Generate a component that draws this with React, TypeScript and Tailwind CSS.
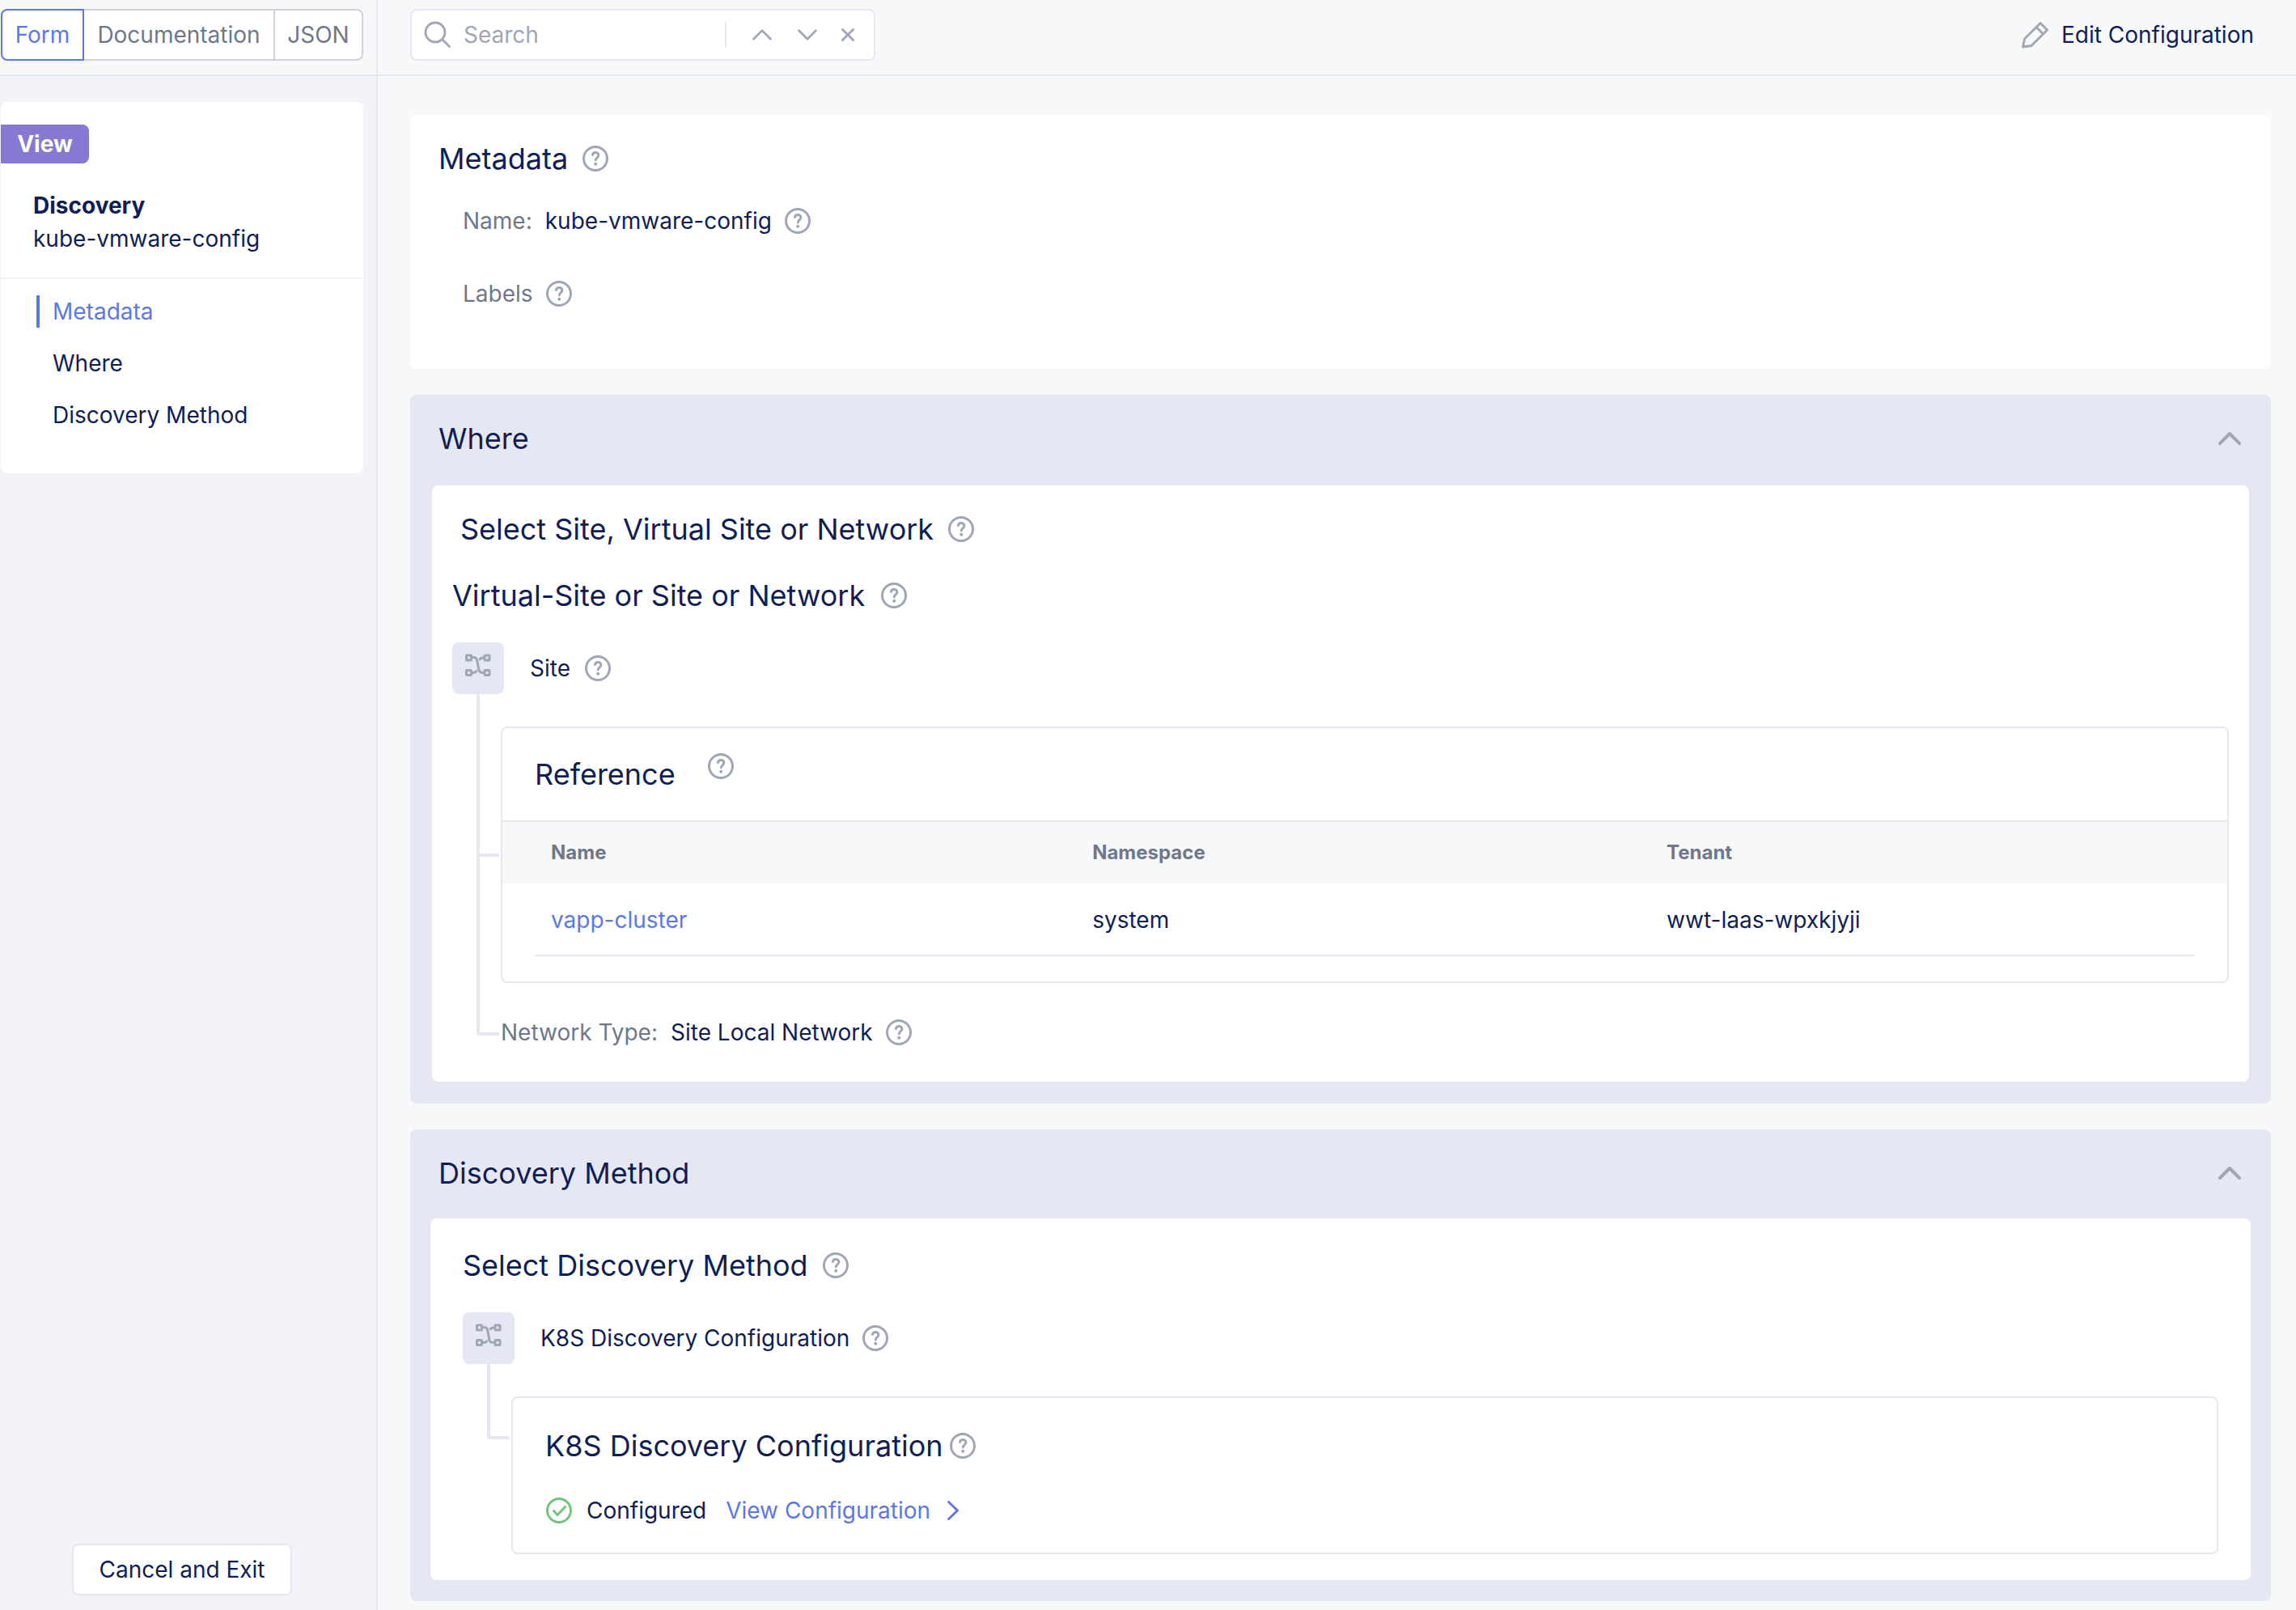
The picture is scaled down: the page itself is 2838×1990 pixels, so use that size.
import React from "react";

const GREY = "#9fa6b6";

function Help() {
  return (
    <button type="button" aria-label="Help" className="block h-8 w-8 shrink-0">
      <svg viewBox="0 0 32 32" fill="none" stroke={GREY} strokeLinecap="round" strokeLinejoin="round" className="h-8 w-8">
        <circle cx="16" cy="16" r="14.5" strokeWidth="3" />
        <path d="M12.4 11.6c.3-1.900 1.800-3.100 3.700-3.100 2.200 0 3.800 1.400 3.800 3.400 0 2.800-3.600 3.200-3.600 6.100" strokeWidth="2.900" />
        <circle cx="16.200" cy="22.800" r="2" fill={GREY} stroke="none" />
      </svg>
    </button>
  );
}

function Node() {
  return (
    <div className="h-16 w-16 shrink-0 rounded-lg bg-[#e5e8f2]">
      <svg viewBox="0 0 64 64" fill="none" stroke={GREY} strokeWidth="3" className="h-16 w-16">
        <rect x="17.500" y="16" width="6" height="6" rx=".5" />
        <rect x="40" y="16" width="6" height="6" rx=".5" />
        <rect x="17.500" y="34.500" width="6" height="6" rx=".5" />
        <rect x="40" y="34.500" width="6" height="6" rx=".5" />
        <path d="M25 18.500h1.500c3 0 4 2 4.500 5l1.500 9c.5 3 2.500 5 5 5H39M39 19h-1c-2 0-3.500 1-4.300 2.800M25 37.500h1c2 0 3.500-1 4.300-2.800" />
      </svg>
    </div>
  );
}

function Chevron({ className }: { className: string }) {
  return (
    <svg viewBox="0 0 32 20" fill="none" stroke="currentColor" strokeLinecap="round" strokeLinejoin="round" className={className}>
      <path d="M4 16 16 4l12 12" />
    </svg>
  );
}

function Panel({ id, title, children, inner }: { id: string; title: string; children: React.ReactNode; inner: string }) {
  return (
    <section id={id} className="flex flex-col rounded-lg bg-[#e5e8f2]">
      <button type="button" className="flex h-[108px] items-center justify-between px-[35px] text-left">
        <h2 className="text-4xl leading-[44px]">{title}</h2>
        <Chevron className="h-5 w-8 stroke-4 text-[#9fa6b6]" />
      </button>
      <div className={inner}>{children}</div>
    </section>
  );
}

const nav = [
  { label: "Where", href: "#where" },
  { label: "Discovery Method", href: "#discovery-method" },
];

export default function App() {
  return (
    <div className="flex min-h-screen bg-[#f7f8fa] font-['Inter',sans-serif] text-[28px] leading-10 text-[#0f1e57]">
      <aside className="flex w-[467px] shrink-0 flex-col border-r-2 border-[#e5e8f2] bg-[#f2f3f9]">
        <div className="h-[94px] border-b-2 border-[#e5e8f2] bg-[#f7f8fa] pt-[11px] pl-px">
          <div className="flex h-16 w-[448px] text-[#6f788a]">
            <button type="button" className="w-[103px] rounded-l-lg border-2 border-[#5b78e6] bg-white text-[#5b78e6]">Form</button>
            <button type="button" className="flex-1 border-y-2 border-[#cfd2dd] bg-white">Documentation</button>
            <button type="button" className="w-[111px] rounded-r-lg border-2 border-[#cfd2dd] bg-white">JSON</button>
          </div>
        </div>
        <div className="mt-8 ml-px w-[448px] rounded-lg bg-white pt-7 pb-[52px]">
          <div className="flex h-12 w-[109px] items-center justify-center rounded-r-lg bg-[#8579d1] font-bold text-white">View</div>
          <div className="border-b-2 border-[#f2f3f9] pt-8 pb-7 pl-10">
            <h1 className="font-bold">Discovery</h1>
            <p className="pt-px">kube-vmware-config</p>
          </div>
          <nav className="flex flex-col gap-6 pt-5 pl-11">
            <a href="#metadata" className="border-l-4 border-[#5b78e6] pl-4 text-[#5b78e6]">Metadata</a>
            {nav.map((n) => (
              <a key={n.href} href={n.href} className="pl-5">{n.label}</a>
            ))}
          </nav>
        </div>
        <button type="button" className="mt-auto mb-[18px] ml-[89px] h-16 w-[272px] rounded-lg border-2 border-[#e5e8f2] bg-white">Cancel and Exit</button>
      </aside>

      <div className="min-w-0 flex-1">
        <header className="flex h-[94px] items-start justify-between border-b-2 border-[#e5e8f2] pt-[11px] pr-[52px] pl-10">
          <div className="flex h-16 w-[575px] items-center rounded-lg border-2 border-[#e5e8f2] bg-white pr-[22px] pl-[15px] text-[#9fa6b6]">
            <svg viewBox="0 0 34 34" fill="none" stroke="currentColor" strokeWidth="2.800" strokeLinecap="round" className="h-[34px] w-[34px] shrink-0">
              <circle cx="14" cy="14" r="12" />
              <path d="m22.500 22.500 9 9" />
            </svg>
            <input aria-label="Search" placeholder="Search" className="ml-[15px] w-0 flex-1 bg-transparent outline-none placeholder:text-[#9fa6b6]" />
            <span className="h-8 w-[2px] bg-[#e5e8f2]" />
            <button type="button" aria-label="Previous" className="ml-[30px]"><Chevron className="h-[18px] w-7 stroke-[3px]" /></button>
            <button type="button" aria-label="Next" className="ml-7"><Chevron className="h-[18px] w-7 rotate-180 stroke-[3px]" /></button>
            <button type="button" aria-label="Clear" className="ml-[26px]">
              <svg viewBox="0 0 20 20" fill="none" stroke="currentColor" strokeWidth="3" strokeLinecap="round" className="h-5 w-5"><path d="m3.500 3.500 13 13M16.500 3.500l-13 13" /></svg>
            </button>
          </div>
          <button type="button" className="flex h-16 items-center gap-4">
            <svg viewBox="0 0 34 34" fill="none" stroke={GREY} strokeWidth="2.900" strokeLinejoin="round" className="h-[34px] w-[34px]">
              <path d="M2.500 32 4.500 22 24 2.500l8.500 8.500L13 30.500zM19 7.500l8.500 8.500" />
            </svg>
            Edit Configuration
          </button>
        </header>

        <main className="flex flex-col gap-8 pt-12 pr-[31px] pb-[11px] pl-10">
          <section id="metadata" className="rounded-lg bg-white pt-8 pb-[73px] pl-[35px]">
            <div className="flex items-center gap-[18px]"><h2 className="text-4xl leading-[44px]">Metadata</h2><Help /></div>
            <div className="flex items-center pt-[35px] pl-[30px]">
              <span className="text-[#6f788a]">Name:</span><span className="mx-4">kube-vmware-config</span><Help />
            </div>
            <div className="flex items-center gap-4 pt-[50px] pl-[30px] text-[#6f788a]">Labels<Help /></div>
          </section>

          <Panel id="where" title="Where" inner="mx-[27px] mt-1 mb-[27px] rounded-lg bg-white pt-8 pr-[25px] pb-[41px] pl-[25px]">
            <div className="flex items-center gap-[18px] pl-[10px]"><h3 className="text-4xl leading-[44px]">Select Site, Virtual Site or Network</h3><Help /></div>
            <div className="flex items-center gap-5 pt-[38px]"><h3 className="text-4xl leading-[44px]">Virtual-Site or Site or Network</h3><Help /></div>
            <div className="flex items-center pt-9"><Node /><span className="mr-[18px] ml-8">Site</span><Help /></div>
            <div className="ml-[30px] flex items-center border-l-4 border-[#e5e8f2] pt-10">
              <div className="mr-[2px] h-1 w-6 shrink-0 bg-[#e5e8f2]" />
              <div className="flex-1 rounded-lg border-2 border-[#e5e8f2] pb-[31px]">
                <div className="flex h-[116px] items-start gap-10 border-b-2 border-[#e5e8f2] pt-[31px] pl-10">
                  <h4 className="mt-1 text-4xl leading-[44px]">Reference</h4><Help />
                </div>
                <table className="w-full table-fixed text-left">
                  <thead className="bg-[#f7f8fa] text-2xl text-[#6f788a]">
                    <tr className="h-[76px]">
                      <th className="w-[34.2%] pl-[60px] font-bold">Name</th>
                      <th className="w-[33.3%] font-bold">Namespace</th>
                      <th className="font-bold">Tenant</th>
                    </tr>
                  </thead>
                  <tbody>
                    <tr className="h-[90px]">
                      <td className="pl-[60px]"><a href="#vapp-cluster" className="text-[#5b78e6]">vapp-cluster</a></td>
                      <td>system</td>
                      <td>wwt-laas-wpxkjyji</td>
                    </tr>
                  </tbody>
                </table>
                <div className="mx-10 -mt-[2px] h-[2px] bg-[#e5e8f2]" />
              </div>
            </div>
            <div className="ml-[30px] flex items-start">
              <div className="h-[65px] w-7 shrink-0 rounded-bl border-b-4 border-l-4 border-[#e5e8f2]" />
              <div className="flex items-center pt-[41px] pl-[2px]">
                <span className="text-[#6f788a]">Network Type:</span><span className="mx-4">Site Local Network</span><Help />
              </div>
            </div>
          </Panel>

          <Panel id="discovery-method" title="Discovery Method" inner="mx-[25px] mt-[2px] mb-[26px] rounded-lg bg-white px-10 pt-9 pb-8">
            <div className="flex items-center gap-[18px]"><h3 className="text-4xl leading-[44px]">Select Discovery Method</h3><Help /></div>
            <div className="flex items-center pt-9"><Node /><span className="mr-4 ml-8">K8S Discovery Configuration</span><Help /></div>
            <div className="ml-[30px] flex items-start gap-[2px]">
              <div className="h-[93px] w-7 shrink-0 rounded-bl border-b-4 border-l-4 border-[#e5e8f2]" />
              <div className="mt-10 flex-1 rounded-lg border-2 border-[#e5e8f2] pt-[37px] pb-8 pl-10">
                <div className="flex items-center gap-2"><h4 className="text-4xl leading-[44px]">K8S Discovery Configuration</h4><Help /></div>
                <div className="flex items-center pt-[38px] pl-px">
                  <svg viewBox="0 0 32 32" fill="none" stroke="#6cc579" strokeWidth="2.900" strokeLinecap="round" strokeLinejoin="round" className="h-8 w-8">
                    <circle cx="16" cy="16" r="14.500" />
                    <path d="m9.500 16.500 4.500 5L23.500 11.500" />
                  </svg>
                  <span className="ml-[18px]">Configured</span>
                  <a href="#configuration" className="ml-6 flex items-center gap-5 text-[#5b78e6]">
                    View Configuration
                    <svg viewBox="0 0 16 26" fill="none" stroke="currentColor" strokeWidth="3" strokeLinecap="round" strokeLinejoin="round" className="h-[26px] w-4">
                      <path d="m2.500 2.500 11 10.500-11 10.500" />
                    </svg>
                  </a>
                </div>
              </div>
            </div>
          </Panel>
        </main>
      </div>
    </div>
  );
}
